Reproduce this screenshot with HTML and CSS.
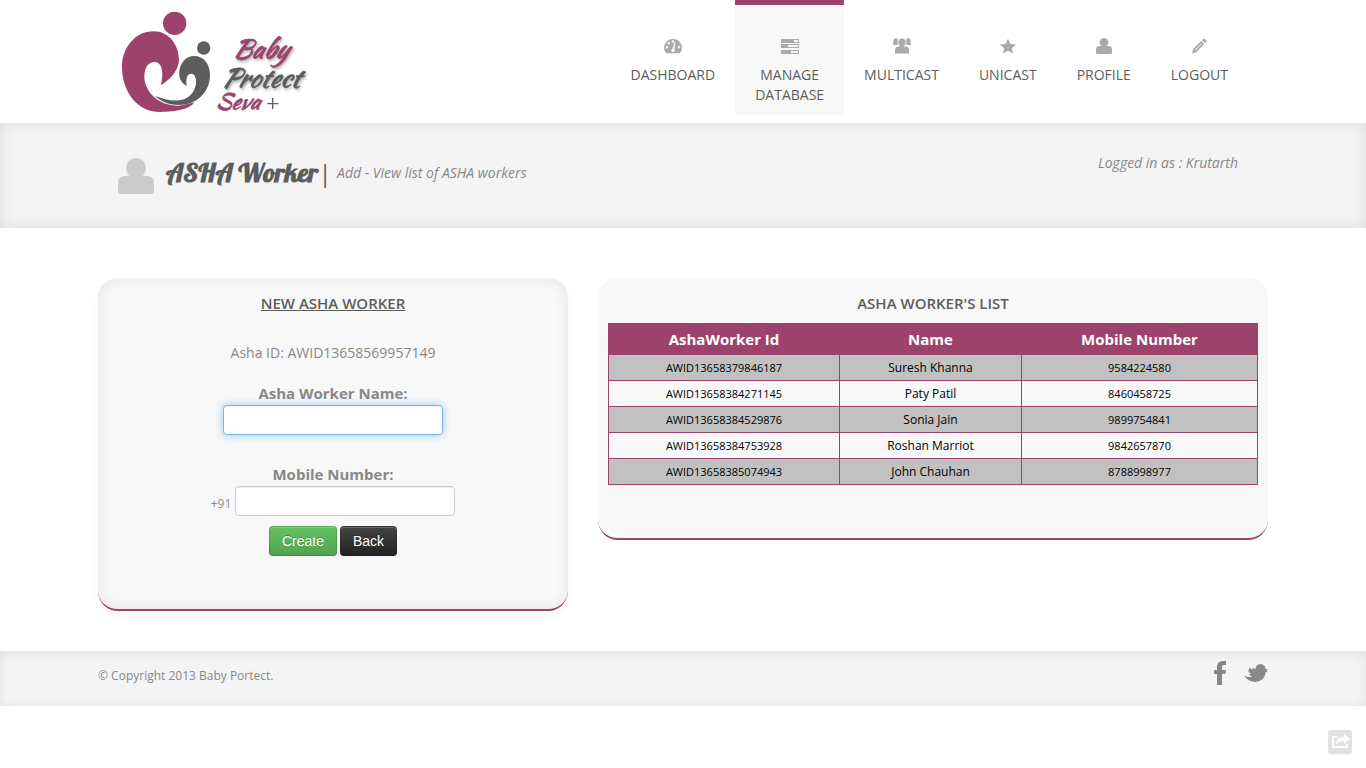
FILE: index.html
```html
<!DOCTYPE html>
<html lang="en">
<head>
<meta charset="utf-8">
<title>ASHA Worker</title>
<link rel="stylesheet" href="styles.css">
</head>
<body>
<header class="site-header">
  <div class="container header-inner">
    <a class="logo" href="#" aria-label="Baby Protect Seva+">
      <svg width="210" height="123" viewBox="0 0 630 369">
        <g class="brand-fill">
          <circle cx="194" cy="70" r="35"/>
          <path d="M36 200C36 142 77 94 130 94C178 94 207 135 207 182C203 215 180 238 153 256C160 225 160 188 135 186C112 186 103 205 103 232C105 280 150 318 205 317C222 316 238 310 252 307C245 325 200 336 150 336C86 336 36 280 36 200Z"/>
        </g>
        <g class="dark-fill">
          <circle cx="281" cy="144" r="20"/>
          <path d="M230 258C212 248 206 232 208 212C212 186 230 168 252 168C282 168 300 192 300 225C300 275 262 315 205 315C175 314 150 304 136 288C165 300 195 306 222 298C248 288 260 262 258 240C256 226 250 221 243 221C232 222 227 232 230 258Z"/>
        </g>
        <g class="logo-text">
          <text class="brand-fill brand-line logo-shadow" x="366" y="174" font-size="78">Baby</text>
          <text class="dark-fill dark-line logo-shadow" x="334" y="262" font-size="78">Protect</text>
          <text class="brand-fill brand-line" x="315" y="328" font-size="66">Seva</text>
        </g>
        <path class="plus" d="M472 311H505M488 294V327"/>
      </svg>
    </a>
    <nav class="main-nav">
      <a href="#">
        <svg width="18" height="16" viewBox="0 0 18 16"><path fill-rule="evenodd" d="M9 1A9 8.6 0 0 0 2.3 15.2H15.7A9 8.6 0 0 0 9 1ZM9 2.3a1.2 1.2 0 1 1 0 2.4a1.2 1.2 0 0 1 0-2.4ZM4.8 4a1.2 1.2 0 1 1 0 2.4a1.2 1.2 0 0 1 0-2.4ZM2.9 8a1.2 1.2 0 1 1 0 2.4a1.2 1.2 0 0 1 0-2.4ZM14.9 8a1.2 1.2 0 1 1 0 2.4a1.2 1.2 0 0 1 0-2.4ZM11.5 4.6L10.3 10.6Q11.4 12.4 10.4 13.6Q8.8 14.6 7.6 13.4Q6.9 11.5 8.8 10.2L10.5 4.5Z"/></svg>
        <span>DASHBOARD</span></a>
      <a class="current" href="#">
        <svg width="18" height="16" viewBox="0 0 18 16"><path fill-rule="evenodd" d="M0 1H18V5H0ZM13 2V4H17V2ZM0 6H18V10H0ZM7 7V9H17V7ZM0 12H18V16H0ZM10 13V15H17V13Z"/></svg>
        <span>MANAGE<br>DATABASE</span></a>
      <a href="#">
        <svg width="18" height="16" viewBox="0 0 18 16"><path d="M9 0.500a3.600 3.900 0 0 1 2.500 6.800L11 8.500H13Q16 9 16 12V15.500H2V12Q2 9 5 8.500H7L6.500 7.300A3.600 3.900 0 0 1 9 .5ZM2.500 0A2.200 2.200 0 0 1 4.700 1.500V7H0V5.500L.7 4.800Q-.5 1 2.500 0ZM15.500 0A2.200 2.200 0 0 0 13.300 1.500V7H18V5.500L17.300 4.800Q18.500 1 15.500 0Z"/></svg>
        <span>MULTICAST</span></a>
      <a href="#">
        <svg width="16" height="16" viewBox="0 0 16 16"><path d="M8 .8L10.200 5.800L16 6.400L11.800 10.200L13 15.600L8 12.800L3 15.600L4.200 10.200L0 6.400L5.800 5.800Z"/></svg>
        <span>UNICAST</span></a>
      <a href="#">
        <svg width="16" height="16" viewBox="0 0 36 36"><use href="#person"/></svg>
        <span>PROFILE</span></a>
      <a href="#">
        <svg width="16" height="16" viewBox="0 0 16 16"><path fill-rule="evenodd" d="M1 15.500L2.200 11L10.200 3L13.300 6.100L5.200 14.200ZM4 11.700L10.300 5.400L10.800 5.900L4.500 12.200ZM11 2.200L12.300 1Q13.200.5 14.200 1.200L15.200 2.300Q15.700 3.200 15 4.200L14 5.300Z"/></svg>
        <span>LOGOUT</span></a>
    </nav>
  </div>
</header>

<section class="page-title">
  <div class="container title-inner">
    <svg class="title-icon" width="36" height="36" viewBox="0 0 36 36"><path id="person" d="M18 0a9.800 10 0 0 1 6.500 17.600Q25 18 29 18Q36 18 36 25V33Q36 36 33 36H3Q0 36 0 33V25Q0 18 7 18Q11 18 11.500 17.600A9.800 10 0 0 1 18 0Z"/></svg>
    <h1>ASHA Worker<span class="bar">|</span></h1>
    <p class="subtitle">Add - View list of ASHA workers</p>
    <p class="login">Logged in as : Krutarth</p>
  </div>
</section>

<main class="container columns">
  <section class="card card-form">
    <h2 class="underlined">NEW ASHA WORKER</h2>
    <form>
      <p class="asha-id">Asha ID: AWID13658569957149</p>
      <label for="worker-name">Asha Worker Name:</label>
      <input class="field active" id="worker-name" type="text">
      <label class="mobile-label" for="mobile">Mobile Number:</label>
      <div class="phone"><span>+91</span><input class="field" id="mobile" type="text"></div>
      <div class="actions">
        <button class="btn btn-create" type="submit">Create</button>
        <button class="btn btn-back" type="button">Back</button>
      </div>
    </form>
  </section>
  <section class="card card-list">
    <h2>ASHA WORKER'S LIST</h2>
    <table>
      <colgroup><col class="col-id"><col class="col-name"><col></colgroup>
      <thead><tr><th>AshaWorker Id</th><th>Name</th><th>Mobile Number</th></tr></thead>
      <tbody>
        <tr><td class="num">AWID13658379846187</td><td>Suresh Khanna</td><td class="num">9584224580</td></tr>
        <tr><td class="num">AWID13658384271145</td><td>Paty Patil</td><td class="num">8460458725</td></tr>
        <tr><td class="num">AWID13658384529876</td><td>Sonia Jain</td><td class="num">9899754841</td></tr>
        <tr><td class="num">AWID13658384753928</td><td>Roshan Marriot</td><td class="num">9842657870</td></tr>
        <tr><td class="num">AWID13658385074943</td><td>John Chauhan</td><td class="num">8788998977</td></tr>
      </tbody>
    </table>
  </section>
</main>

<footer class="site-footer">
  <div class="container footer-inner">
    <p>© Copyright 2013 Baby Portect.</p>
    <div class="social">
      <a href="#" aria-label="Facebook"><svg width="12" height="24" viewBox="0 0 12 24"><path d="M3 24V13H0V9H3V6Q3 0 9 0H12V4H10Q8 4 8 6V9H12L11.500 13H8V24Z"/></svg></a>
      <a href="#" aria-label="Twitter"><svg width="24" height="24" viewBox="0 0 24 24"><path d="M0 14.500Q4 17.200 8 15.800Q5.500 15 5.500 13L7 12.800Q4.200 11.500 4 9L5.500 9.200Q4.600 8 5 6.500L8.500 8.800L8.700 6.500L11.300 8.300Q12 3.300 16.500 3Q19.200 3.200 21 5.500L21.500 8L24 8.500L22.600 9.600L23.600 10.800L21.600 11.200Q20.800 20 11.500 21Q4 21 0 14.500Z"/></svg></a>
    </div>
  </div>
</footer>
<button class="share" type="button" aria-label="Share"><svg width="24" height="24" viewBox="0 0 24 24"><path d="M10 6H4V18H20V14H18V16H6V8H8Z"/><path d="M8 15Q8 7.500 16 7V4L22 9L16 14V11Q11 10.500 8 15Z"/></svg></button>
</body>
</html>
```
FILE: styles.css
```css
* { box-sizing: border-box; }
body {
  margin: 0;
  background: #fff;
  color: #888;
  font-family: "Open Sans", sans-serif;
  font-size: 14px;
  line-height: 20px;
}
h1, h2, p { margin: 0; }
a { color: inherit; text-decoration: none; }
svg { display: block; }
.container { max-width: 1170px; margin: 0 auto; }

.header-inner {
  display: flex;
  justify-content: space-between;
  align-items: flex-start;
  padding: 0 20px 0 12px;
}
.brand-fill { fill: #9d426b; }
.dark-fill { fill: #5d5d5d; }
.brand-line { stroke: #9d426b; stroke-width: 2; }
.dark-line { stroke: #5d5d5d; stroke-width: 2; }
.logo-text {
  font-family: "Brush Script MT", "Kaushan Script", Lobster, "Liberation Serif", serif;
  font-style: italic;
}
.logo-shadow { filter: drop-shadow(3px 5px 5px rgba(0, 0, 0, .35)); }
.plus { stroke: #5d5d5d; stroke-width: 4; }
.main-nav { display: flex; }
.main-nav a {
  display: flex;
  flex-direction: column;
  align-items: center;
  gap: 11px;
  padding: 33px 20px 10px;
  border-top: 5px solid transparent;
  color: #5d5d5d;
  text-align: center;
}
.main-nav svg { fill: #aaa; }
.main-nav .current { background: #f8f8f8; border-top-color: #9d426b; }

.page-title {
  background: #f4f4f4;
  box-shadow: inset 0 0 14px rgba(0, 0, 0, .1);
}
.title-inner {
  display: flex;
  align-items: flex-start;
  padding: 30px 30px 30px 20px;
  min-height: 105px;
}
.title-icon { margin-top: 5px; fill: #ccc; }
h1 {
  margin: 0 6px 0 12px;
  color: #5d5d5d;
  font: bold 26px/40px Lobster, "Liberation Serif", serif;
}
.bar { font-family: "Open Sans", sans-serif; font-size: 24px; font-style: italic; font-weight: 400; }
.subtitle, .login { font-style: italic; }
.subtitle { padding-top: 10px; }
.login { margin-left: auto; }

.columns {
  display: grid;
  grid-template-columns: 47fr 67fr;
  align-items: start;
  gap: 30px;
  padding: 50px 0 40px;
}
.card {
  padding: 15px 10px 53px;
  background: #f8f8f8;
  border-bottom: 2px solid #9d426b;
  border-radius: 20px;
}
.card-form { box-shadow: inset 0 0 15px rgba(0, 0, 0, .08), 0 5px 10px rgba(0, 0, 0, .04); }
h2 {
  color: #5d5d5d;
  font-size: 15px;
  font-weight: 600;
  line-height: 20px;
  text-align: center;
}
.underlined { text-decoration: underline; }
form { display: flex; flex-direction: column; align-items: center; }
.asha-id { margin: 30px 0 20px; }
label { margin-bottom: 2px; font-size: 15px; font-weight: 700; line-height: 20px; }
.mobile-label { margin-top: 29px; }
.field {
  width: 220px;
  height: 30px;
  padding: 4px 6px;
  border: 1px solid #ccc;
  border-radius: 4px;
  background: #fff;
  box-shadow: inset 0 1px 1px rgba(0, 0, 0, .075);
  outline: 0;
}
.field.active, .field:focus {
  border-color: #73b8ee;
  box-shadow: inset 0 1px 1px rgba(0, 0, 0, .075), 0 0 8px rgba(82, 168, 236, .6);
}
.phone { display: flex; gap: 4px; font-size: 12px; }
.phone span { padding-top: 8px; }
.actions { display: flex; gap: 3px; margin-top: 10px; }
.btn {
  padding: 4px 12px;
  border: 1px solid rgba(0, 0, 0, .15);
  border-radius: 4px;
  color: #fff;
  font: 14px/20px "Liberation Sans", Arial, sans-serif;
  text-shadow: 0 -1px 0 rgba(0, 0, 0, .25);
  box-shadow: inset 0 1px 0 rgba(255, 255, 255, .2);
}
.btn-create { background: linear-gradient(#62c462, #51a351) border-box; }
.btn-back { background: linear-gradient(#444, #222) border-box; }

table {
  width: 100%;
  margin-top: 10px;
  border: 1px solid #9d426b;
  border-collapse: collapse;
  table-layout: fixed;
  color: #000;
  font-family: "Trebuchet MS", "Open Sans", sans-serif;
  text-align: center;
}
.col-id { width: 231px; }
.col-name { width: 182px; }
th {
  padding: 5px 7px;
  border: 1px solid #9d426b;
  background: #9d426b;
  color: #fff;
  font-size: 15px;
}
td {
  padding: 3px 7px 2px;
  border: 1px solid #9d426b;
  font-size: 12px;
}
td.num { font-size: 11px; }
tbody tr:nth-child(odd) { background: #c1c1c1; }

.site-footer {
  background: #f4f4f4;
  box-shadow: inset 0 2px 12px rgba(0, 0, 0, .08);
}
.footer-inner {
  display: flex;
  justify-content: space-between;
  min-height: 55px;
  padding-top: 10px;
}
.footer-inner p { padding-top: 5px; font-size: 12px; }
.social { display: flex; gap: 18px; fill: #888; }
.share {
  position: fixed;
  right: 14px;
  bottom: 14px;
  padding: 0;
  border: 0;
  border-radius: 3px;
  background: #e2e2e2;
}
.share svg { fill: #fff; }
```
